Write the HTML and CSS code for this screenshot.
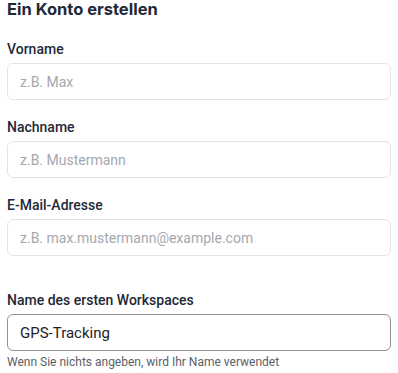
FILE: index.html
```html
<!DOCTYPE html>
<html lang="de">
<head>
    <meta charset="UTF-8">
    <meta name="viewport" content="width=device-width, initial-scale=1.0">
    <title>Ein Konto erstellen</title>
    <link rel="stylesheet" href="styles.css">
</head>
<body>
    <div class="signup">
        <h2 class="signup-title">Ein Konto erstellen</h2>
        <div class="field">
            <label for="firstname">Vorname</label>
            <input type="text" id="firstname" placeholder="z.B. Max">
        </div>
        <div class="field">
            <label for="lastname">Nachname</label>
            <input type="text" id="lastname" placeholder="z.B. Mustermann">
        </div>
        <div class="field">
            <label for="email">E-Mail-Adresse</label>
            <input type="email" id="email" placeholder="z.B. max.mustermann@example.com">
        </div>
        <div class="field field-workspace">
            <label for="workspace">Name des ersten Workspaces</label>
            <input type="text" id="workspace" class="filled" value="GPS-Tracking">
            <p class="hint">Wenn Sie nichts angeben, wird Ihr Name verwendet</p>
        </div>
    </div>
</body>
</html>
```

FILE: styles.css
```css
body {
    margin: 0;
    padding: 0;
    background: #fff;
    font-family: Roboto, "Noto Sans", sans-serif;
    color: #1f2937;
}
.signup {
    padding: 0 7px;
}
.signup-title {
    margin: 0;
    font-family: Inter, Roboto, sans-serif;
    font-size: 16.5px;
    font-weight: 700;
    line-height: 18px;
}
.field {
    display: flex;
    flex-direction: column;
    margin-top: 18px;
}
.field:first-of-type {
    margin-top: 22px;
}
.field-workspace {
    margin-top: 35px;
}
.field label {
    font-size: 14px;
    font-weight: 500;
    line-height: 18px;
    margin-bottom: 5px;
}
.field input {
    box-sizing: border-box;
    height: 37px;
    width: 100%;
    padding: 0 12px;
    border: 1px solid #e2e4e8;
    border-radius: 6px;
    font-family: Roboto, sans-serif;
    font-size: 14px;
    color: #1f2937;
    background: #fff;
    outline: none;
}
.field input::placeholder {
    color: #a4a8ae;
}
.field input.filled {
    border-color: #8e9196;
    font-size: 15px;
    color: #222;
}
.hint {
    margin: 4px 0 0;
    font-size: 12px;
    line-height: 14px;
    color: #5b6068;
}
```
